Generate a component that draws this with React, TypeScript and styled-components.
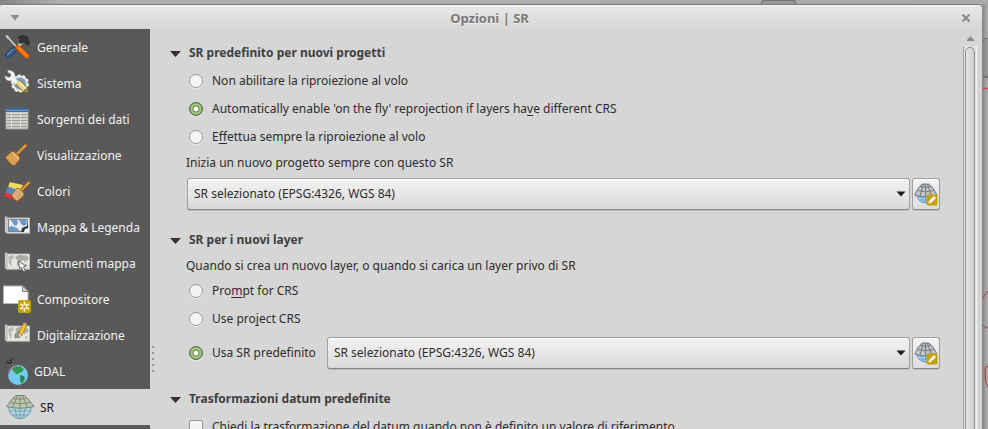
import React, { useState } from "react";
import type { ReactNode } from "react";
import styled, { createGlobalStyle } from "styled-components";

const GlobalStyle = createGlobalStyle`
  * { box-sizing: border-box; }
  body {
    margin: 0;
    overflow: hidden;
    background: #a4a4a4;
    color: #2d2d2d;
    font-family: "Noto Sans", sans-serif;
    font-size: 12px;
    line-height: 16px;
  }
  button, select, input { font: inherit; color: inherit; margin: 0; }
`;

/* ---------- frame ---------- */

const Desktop = styled.div`
  display: grid;
  grid-template-columns: minmax(0, 1fr) 5px;
  grid-template-rows: 4px minmax(0, 1fr);
  height: 100vh;
`;

const TopEdge = styled.div`
  grid-column: 1 / -1;
  display: flex;
  justify-content: flex-end;
  padding-right: 192px;
  background: linear-gradient(90deg, #858585, #adadad 60px, #aaaaaa);
`;

const TopHandle = styled.span`
  width: 35px;
  height: 4px;
  border: 1px solid #707070;
  border-bottom: 0;
  border-radius: 3px 3px 0 0;
  background: #999999;
`;

const SideEdge = styled.div`
  display: grid;
  grid-template-rows: 34px 40px minmax(0, 1fr);
  background: linear-gradient(90deg, #8d8d8d, #b0b0b0);
`;

const EdgeBand = styled.span`
  border-top: 1px solid #777777;
  border-bottom: 2px solid #707070;
  background: linear-gradient(90deg, #838383, #9c9c9c);
`;

const EdgeDrawing = styled.svg`
  display: block;
  width: 5px;
  height: 351px;
`;

const Window = styled.div`
  display: flex;
  flex-direction: column;
  min-height: 0;
  overflow: hidden;
  border-top: 1px solid #777777;
  border-right: 1px solid #858585;
  border-radius: 3px 5px 0 0;
  background: #d6d6d6;
`;

const TitleBar = styled.header`
  display: grid;
  grid-template-columns: 30px minmax(0, 1fr) 33px;
  align-items: center;
  flex: none;
  height: 24px;
  border-top: 1px solid #f7f7f7;
  background: linear-gradient(#e8e8e8, #d6d6d6);
`;

const Title = styled.h1`
  margin: 0;
  text-align: center;
  font-size: 13px;
  line-height: 20px;
  font-weight: 700;
  color: #787878;
  text-shadow: 0 1px 0 #f4f4f4;
`;

const PlainButton = styled.button`
  display: grid;
  place-items: center;
  padding: 0;
  border: 0;
  background: transparent;
`;

const Body = styled.div`
  display: grid;
  grid-template-columns: 150px 6px minmax(0, 1fr) 19px;
  flex: 1;
  min-height: 0;
`;

/* ---------- sidebar ---------- */

const Sidebar = styled.nav`
  overflow: hidden;
  background: #595959;
`;

const NavItem = styled.button<{ $active: boolean }>`
  display: flex;
  align-items: center;
  gap: 3px;
  width: 100%;
  height: 36px;
  padding: 2px 0 0 2px;
  border: 0;
  text-align: left;
  white-space: nowrap;
  background: ${(p) => (p.$active ? "#d6d6d6" : "transparent")};
  color: ${(p) => (p.$active ? "#1a1a1a" : "#f2f2f2")};
`;

const NavIcon = styled.svg`
  flex: none;
  align-self: flex-start;
  height: 32px;
`;

const Splitter = styled.div`
  display: flex;
  flex-direction: column;
  align-items: center;
  gap: 4px;
  padding-top: 317px;
`;

const Dot = styled.span`
  flex: none;
  width: 2px;
  height: 2px;
  background: #969696;
`;

/* ---------- settings ---------- */

const Settings = styled.main`
  display: flex;
  flex-direction: column;
  gap: 16px;
  padding: 10px 23px 0 14px;
  overflow: hidden;
`;

const Section = styled.section`
  flex: none;
`;

const SectionHeader = styled.button`
  display: flex;
  align-items: center;
  gap: 8px;
  height: 28px;
  padding: 0;
  border: 0;
  background: transparent;
  font-weight: 700;
  color: #404040;
`;

const Fields = styled.div`
  padding-left: 16px;
`;

const Caption = styled.p`
  margin: 0;
  line-height: 23px;
`;

const Option = styled.label`
  display: flex;
  align-items: center;
  gap: 9px;
  height: 28px;
  padding-left: 3px;
  white-space: nowrap;
`;

const Radio = styled.input`
  appearance: none;
  flex: none;
  width: 14px;
  height: 14px;
  border: 1px solid #989898;
  border-radius: 50%;
  background: #f4f4f4;
  box-shadow: 0 1px 0 #e6e6e6;

  &:checked {
    border-color: #5b6650;
    background: radial-gradient(circle, #ffffff 0 2px, #64824a 3px, #a0cb78 4px 5px, #7c9f5e 6px);
  }
`;

const Check = styled.input`
  appearance: none;
  flex: none;
  width: 14px;
  height: 14px;
  border: 1px solid #989898;
  border-radius: 2px;
  background: #f4f4f4;
`;

const Mnemonic = styled.span`
  text-decoration: underline;
  text-decoration-skip-ink: none;
  text-underline-offset: 2px;
`;

const PickerRow = styled.div`
  display: flex;
  align-items: center;
  gap: 2px;
  padding-top: 4px;
`;

const OptionCell = styled.div`
  flex: none;
  padding-right: 8px;
`;

const SelectBox = styled.div`
  display: grid;
  grid-template-columns: minmax(0, 1fr) 14px;
  align-items: center;
  flex: 1;
  min-width: 0;
  margin-left: 1px;
`;

const Select = styled.select`
  grid-column: 1 / -1;
  grid-row: 1;
  appearance: none;
  width: 100%;
  height: 32px;
  padding: 0 20px 1px 6px;
  border: 1px solid #a0a0a0;
  border-bottom-color: #858585;
  border-radius: 3px;
  background: linear-gradient(#f3f3f3, #d9d9d9);
  box-shadow: inset 0 1px 0 #ffffff, 0 1px 0 #bdbdbd;
`;

const SelectArrow = styled.svg`
  grid-column: 2;
  grid-row: 1;
  pointer-events: none;
`;

const ToolButton = styled.button`
  display: grid;
  place-items: center;
  flex: none;
  width: 28px;
  height: 32px;
  padding: 0;
  border: 1px solid #a0a0a0;
  border-bottom-color: #858585;
  border-radius: 3px;
  background: linear-gradient(#f3f3f3, #dddddd);
  box-shadow: inset 0 1px 0 #ffffff, 0 1px 0 #bdbdbd;
`;

/* ---------- scroll bar ---------- */

const ScrollBar = styled.div`
  display: flex;
  flex-direction: column;
  min-height: 0;
  padding-right: 5px;
`;

const ScrollUp = styled(PlainButton)`
  flex: none;
  height: 17px;
  padding-top: 2px;
`;

const Track = styled.div`
  flex: 1;
  min-height: 0;
  padding: 1px 1px 0;
  border-left: 1px solid #a6a6a6;
  border-right: 1px solid #f4f4f4;
  background: #e4e4e4;
`;

const Thumb = styled.div`
  height: 100%;
  border: 1px solid #8e8e8e;
  border-bottom: 0;
  border-radius: 5px 5px 0 0;
  background: linear-gradient(90deg, #e6e6e6, #cdcdcd);
`;

/* ---------- drawings ---------- */

const toolsIcon = (
  <>
    <path d="M5 5.5 15.5 17" stroke="#d6d6d6" strokeWidth="1.5" />
    <path d="M3.5 4 6 4.500 7.500 7 5.500 8 4 6Z" fill="#c9c9c9" />
    <path d="M13 17 19 10 21 12 15 19Z" fill="#c7cccb" />
    <path d="M16 6.500C19 3.500 23 3.500 26 7L26.500 9.500 28 11 26 15 23.500 13 22.500 10.500 20.500 11.500 19 13 17 11 18.500 8.500Z" fill="#2e3532" stroke="#252a28" strokeWidth=".6" />
    <path d="M12.500 18 6 24.500" stroke="#1e3960" strokeWidth="5.400" strokeLinecap="round" />
    <path d="M12.500 18 6 24.500" stroke="#3a6299" strokeWidth="3.600" strokeLinecap="round" />
    <path d="M11 18 5 24" stroke="#7c9cc9" strokeWidth="1" />
    <path d="M16 16.500 24.800 25" stroke="#c94900" strokeWidth="5.200" strokeLinecap="round" />
    <path d="M16 16.500 24.800 25" stroke="#ff7508" strokeWidth="3.600" strokeLinecap="round" />
    <path d="M17.500 17 25.500 24.500" stroke="#ffab60" strokeWidth="1" strokeDasharray="2 1" />
  </>
);

const systemIcon = (
  <>
    <circle cx="18" cy="16.500" r="8" fill="#e9ecee" stroke="#f1f1f1" strokeWidth="2" strokeDasharray="3 2" />
    <circle cx="18" cy="16.500" r="6" fill="#709dcb" stroke="#b5c0cb" />
    <path d="M6 3.500C11 3 14 7 12.500 10.500L17 15 14 18 9.500 13.500C6.500 14.500 3 12.500 3 9L6.500 10.500C8 10.500 9.500 9 9 7.500 8.500 6 7 5.500 6 5.500Z" fill="#f3f3f1" stroke="#c7c9c7" strokeWidth=".6" />
    <path d="M15.500 15 23.500 23" stroke="#816a21" strokeWidth="6.200" />
    <path d="M15.500 15 24 23.500" stroke="#e8d27c" strokeWidth="4.800" />
    <path d="M17 14.500 24.500 22" stroke="#fff2b8" strokeWidth="1.200" />
    <path d="M21.500 25 26 20.500" stroke="#806c32" />
    <circle cx="24.500" cy="24" r="1.800" fill="#bba252" stroke="#5b481b" strokeWidth=".8" />
  </>
);

const tableIcon = (
  <>
    <path d="M4 5.500H26V26H4Z" fill="#c9cbc5" stroke="#a3a59f" />
    <path d="M3.500 5H26.500V9H3.500Z" fill="#41699f" />
    <path d="M4 7.500H26" stroke="#6c95c9" />
    <path d="M5 11.500H25M5 14.500H25M5 17.500H25M5 20.500H25M5 23.500H25" stroke="#979993" strokeWidth="1" />
    <path d="M9.500 10V26M18.500 10V26" stroke="#dcddd8" strokeWidth="1" />
    <path d="M4 10.500H26M4 13H26M4 16H26M4 19H26M4 22H26" stroke="#dcddd8" strokeWidth=".8" />
  </>
);

const broomIcon = (
  <>
    <path d="M23.500 6.500 14 16" stroke="#9c6420" strokeWidth="3.400" strokeLinecap="round" />
    <path d="M23.500 6.500 14 16" stroke="#dd9c40" strokeWidth="2" strokeLinecap="round" />
    <path d="M9 13 12 12.500 17.500 18 17.500 21 12 26.800 9 25 6 22 3.500 18.500Z" fill="#dfa656" stroke="#9d6524" strokeWidth=".9" />
    <path d="M6 16 13.500 24M8 14 16 22M5 19 10 25" stroke="#bc8238" strokeWidth=".6" />
    <path d="M10 13.500 17 20" stroke="#efc17b" strokeWidth="1.200" />
  </>
);

const colorsIcon = (
  <>
    <path d="M8 7 21 10 18 16 6 12Z" fill="#efdb55" />
    <path d="M6 11.500 16 15 12 21 3.500 18Z" fill="#5f86b8" />
    <path d="M3.500 17.500 12 20.500 14 25 1.500 21.500Z" fill="#dc3230" />
    <path d="M27 7.500 19 15.500" stroke="#986123" strokeWidth="3.200" strokeLinecap="round" />
    <path d="M27 7.500 19 15.500" stroke="#dd9c40" strokeWidth="1.800" strokeLinecap="round" />
    <path d="M14.500 13.500 17 13.500 22 18.500 21.500 21 15.500 26 12.500 24.500 9.500 20Z" fill="#ddb07a" stroke="#9b642b" strokeWidth=".9" />
    <path d="M12 17.500 18 23.500M14 15.500 20 21.500" stroke="#b87f48" strokeWidth=".6" />
  </>
);

const mapSheet = (
  <>
    <path d="M4.500 7H27.500V22H4.500Z" fill="#e6e6e2" stroke="#c1c1bc" strokeWidth=".8" />
    <path d="M3 5.500H5V21.500H3Z" fill="#d8d8d3" stroke="#949490" strokeWidth=".6" />
    <path d="M4 22.500H28" stroke="#a8a8a4" strokeWidth=".8" />
  </>
);

const legendIcon = (
  <>
    {mapSheet}
    <path d="M6.500 8.500H25.500V20.500H6.500Z" fill="#eceeed" stroke="#53585c" strokeWidth=".7" />
    <path d="M9 9H15L16 12 14 15 12 14 10 11ZM17 9H24L25 13 22 15 19 13 18 11ZM7 16 10 15 15 17 18 20H7Z" fill="#6b98cd" />
    <path d="M19 21 20 17 25 15 26 13V18L22 21Z" fill="#30363a" />
    <path d="M22 21 23 18 27 17V21Z" fill="#f6f6f6" />
  </>
);

const continents = (
  <>
    <path d="M6 10 9 8 12 9 11 12 9 13 10 16 9 20 7 16Z" fill="#b9bbb2" />
    <path d="M13 10 17 8 25 8.500 27 12 23 15 21 13 18 15 15 13ZM15 14 18 16 17 20 15 18ZM23 17 26 18 24 20Z" fill="#a9aca3" />
  </>
);

const mapToolsIcon = (
  <>
    {mapSheet}
    {continents}
    <path d="M16.500 14 17.500 22 19.500 20.500 21.500 25 23.500 24 21.500 19.800 24 19Z" fill="#f5f5f5" stroke="#555753" strokeWidth=".9" />
  </>
);

const composerIcon = (
  <>
    <path d="M1.500 3H21L26 8V20.500H1.500Z" fill="#ffffff" stroke="#b7b7b7" />
    <path d="M20.500 3V8.500H26Z" fill="#d4d4d4" stroke="#777777" strokeWidth=".9" />
    <rect x="16" y="17" width="13" height="13" rx="2" fill="#c4a000" />
    <path d="M22.500 18.500V28.500M18.200 21 26.800 26M26.800 21 18.200 26" stroke="#fffbe5" strokeWidth="1.700" />
    <circle cx="22.500" cy="23.500" r="1.500" fill="#c4a000" />
  </>
);

const digitizeIcon = (
  <>
    {mapSheet}
    {continents}
    <path d="M13 15 17 12 20 15 17 18 13 19Z" fill="#92988b" stroke="#656c60" strokeWidth=".6" />
    <path d="M23 5.500 18.500 15" stroke="#ac7d00" strokeWidth="4.200" />
    <path d="M23 5.500 18.500 15" stroke="#f5cb28" strokeWidth="2.800" />
    <path d="M21.500 4 25 5.500" stroke="#e8ac9a" strokeWidth="1.200" />
    <path d="M16.500 14.500 20.500 16 16.500 19Z" fill="#ecd2a3" stroke="#8b7451" strokeWidth=".5" />
  </>
);

const gdalIcon = (
  <>
    <circle cx="16" cy="20" r="10" fill="#73cbf4" />
    <path d="M12 12 18 11 22 14 20 17 17 18 16 20 13 18 10 14.500Z" fill="#2e9a50" />
    <path d="M18 20 22 21 23 24 20 29 18 26Z" fill="#278c48" />
    <path d="M6 20C8 15 10 13 15 11" fill="none" stroke="#b4586a" strokeWidth="1" />
    <path d="M9 8 14 12M8 9 9 14" stroke="#a44558" strokeWidth=".7" strokeDasharray="2 1" />
    <path d="M2.500 8 5 7 6.500 8.500 4 9.500ZM8.500 4 12 2.500 12.500 4 9.500 5.500Z" fill="#454545" />
    <path d="M5 6 8 4.500 10 7 7 9Z" fill="#111111" />
    <path d="M6.500 6 8 7" stroke="#eeeeee" />
  </>
);

const projectionIcon = (
  <>
    <circle cx="18" cy="16.500" r="11.200" fill="#b1d5df" stroke="#6c9dac" />
    <path d="M7.500 20H28.500M10 24H26M18 15V28M13 15Q13 23 16 27M23 15Q23 23 20 27" fill="none" stroke="#6599a8" strokeWidth=".8" />
    <path d="M13.500 4.500H22.500L27 9 32 15.500Q18 19 4.500 15.500L9.500 9Z" fill="#bbc5ad" stroke="#747d6a" strokeWidth=".9" />
    <path d="M11.500 7.500Q18 9 24.500 7.500M8.500 11.500Q18 14 28 11.500M18 4.500V17M15.500 4.500 10.500 16.500M20.500 4.500 25.500 16.500" fill="none" stroke="#747d6a" strokeWidth=".8" />
  </>
);

function CrsGlyph() {
  return (
    <svg width="24" height="24" viewBox="0 0 24 24" aria-hidden="true">
      <circle cx="11.500" cy="12" r="9" fill="#b9dcf8" stroke="#719cc2" />
      <path d="M3 15H20M5 18H18M11.500 12V21M7.500 13Q7.500 18 10 21M15.500 13Q15.500 18 13 21" fill="none" stroke="#4f91c7" strokeWidth=".8" />
      <path d="M8 2H15L19 6 23 13Q11.500 17 .5 13L4.500 6Z" fill="#c1c3c5" stroke="#6f7479" strokeWidth=".9" />
      <path d="M6 4.500Q11.500 6 17 4.500M3.500 8.500Q11.500 11 20 8.500M11.500 2V14.500M9.500 2 6 14M13.500 2 17.500 14" fill="none" stroke="#70757a" strokeWidth=".9" />
      <rect x="12.500" y="12.500" width="11" height="11" rx="1.500" fill="#c4a000" />
      <path d="M14.500 21.500 15 19 20 14 22 16 17 21Z" fill="#ffffff" />
      <path d="M15.500 18.500 17.500 20.500" stroke="#c4a000" strokeWidth=".7" />
    </svg>
  );
}

function CrsSelect({ label }: { label: string }) {
  return (
    <>
      <SelectBox>
        <Select aria-label={label}>
          <option>SR selezionato (EPSG:4326, WGS 84)</option>
        </Select>
        <SelectArrow width="10" height="6" viewBox="0 0 10 6" aria-hidden="true">
          <path d="M.5.5H9.500L5 5.500Z" fill="#1f1f1f" />
        </SelectArrow>
      </SelectBox>
      <ToolButton type="button" aria-label="Seleziona SR">
        <CrsGlyph />
      </ToolButton>
    </>
  );
}

function Group({ title, children }: { title: string; children: ReactNode }) {
  const [open, setOpen] = useState(true);
  return (
    <Section>
      <SectionHeader type="button" aria-expanded={open} onClick={() => setOpen(!open)}>
        <svg width="11" height="8" viewBox="0 0 11 8" aria-hidden="true">
          <path d="M0 2H11L5.500 8Z" fill="#333333" />
        </svg>
        {title}
      </SectionHeader>
      {open && <Fields>{children}</Fields>}
    </Section>
  );
}

const pages: { name: string; icon: ReactNode; iconWidth: number }[] = [
  { name: "Generale", icon: toolsIcon, iconWidth: 32 },
  { name: "Sistema", icon: systemIcon, iconWidth: 32 },
  { name: "Sorgenti dei dati", icon: tableIcon, iconWidth: 32 },
  { name: "Visualizzazione", icon: broomIcon, iconWidth: 32 },
  { name: "Colori", icon: colorsIcon, iconWidth: 32 },
  { name: "Mappa & Legenda", icon: legendIcon, iconWidth: 32 },
  { name: "Strumenti mappa", icon: mapToolsIcon, iconWidth: 32 },
  { name: "Compositore", icon: composerIcon, iconWidth: 32 },
  { name: "Digitalizzazione", icon: digitizeIcon, iconWidth: 32 },
  { name: "GDAL", icon: gdalIcon, iconWidth: 29 },
  { name: "SR", icon: projectionIcon, iconWidth: 35 },
];

export default function App() {
  const [page, setPage] = useState("SR");
  return (
    <>
      <GlobalStyle />
      <Desktop>
        <TopEdge>
          <TopHandle />
        </TopEdge>
        <Window>
          <TitleBar>
            <PlainButton type="button" aria-label="Menu finestra">
              <svg width="10" height="6" viewBox="0 0 10 6" aria-hidden="true">
                <path d="M.5 0H9.500L5 5.500Z" fill="#8c8c8c" />
              </svg>
            </PlainButton>
            <Title>Opzioni | SR</Title>
            <PlainButton type="button" aria-label="Chiudi">
              <svg width="10" height="10" viewBox="0 0 10 10" aria-hidden="true">
                <path d="M1.500 1.500 8.500 8.500M8.500 1.500 1.500 8.500" stroke="#8c8c8c" strokeWidth="2.200" />
              </svg>
            </PlainButton>
          </TitleBar>
          <Body>
            <Sidebar aria-label="Opzioni">
              {pages.map((item) => (
                <NavItem
                  key={item.name}
                  type="button"
                  $active={page === item.name}
                  onClick={() => setPage(item.name)}
                >
                  <NavIcon
                    width={item.iconWidth}
                    viewBox={`0 0 ${item.iconWidth} 32`}
                    fill="none"
                    aria-hidden="true"
                  >
                    {item.icon}
                  </NavIcon>
                  {item.name}
                </NavItem>
              ))}
            </Sidebar>
            <Splitter>
              <Dot />
              <Dot />
              <Dot />
              <Dot />
              <Dot />
            </Splitter>
            <Settings>
              <Group title="SR predefinito per nuovi progetti">
                <Option>
                  <Radio type="radio" name="otf" />
                  <span>Non abilitare la riproiezione al volo</span>
                </Option>
                <Option>
                  <Radio type="radio" name="otf" defaultChecked />
                  <span>
                    Automatically enable 'on the fly' reprojection if layers ha<Mnemonic>v</Mnemonic>e different CRS
                  </span>
                </Option>
                <Option>
                  <Radio type="radio" name="otf" />
                  <span>
                    E<Mnemonic>f</Mnemonic>fettua sempre la riproiezione al volo
                  </span>
                </Option>
                <Caption>Inizia un nuovo progetto sempre con questo SR</Caption>
                <PickerRow>
                  <CrsSelect label="Inizia un nuovo progetto sempre con questo SR" />
                </PickerRow>
              </Group>
              <Group title="SR per i nuovi layer">
                <Caption>Quando si crea un nuovo layer, o quando si carica un layer privo di SR</Caption>
                <Option>
                  <Radio type="radio" name="layer" />
                  <span>
                    Pro<Mnemonic>m</Mnemonic>pt for CRS
                  </span>
                </Option>
                <Option>
                  <Radio type="radio" name="layer" />
                  <span>
                    Use pro<Mnemonic>j</Mnemonic>ect CRS
                  </span>
                </Option>
                <PickerRow>
                  <OptionCell>
                    <Option>
                      <Radio type="radio" name="layer" defaultChecked />
                      <span>Usa SR predefinito</span>
                    </Option>
                  </OptionCell>
                  <CrsSelect label="SR predefinito per i nuovi layer" />
                </PickerRow>
              </Group>
              <Group title="Trasformazioni datum predefinite">
                <Option>
                  <Check type="checkbox" />
                  <span>Chiedi la trasformazione del datum quando non è definito un valore di riferimento</span>
                </Option>
              </Group>
            </Settings>
            <ScrollBar>
              <ScrollUp type="button" aria-label="Scorri in alto">
                <svg width="7" height="5" viewBox="0 0 7 5" aria-hidden="true">
                  <path d="M3.500 0 7 4V5H0V4Z" fill="#8c8c8c" />
                </svg>
              </ScrollUp>
              <Track>
                <Thumb />
              </Track>
            </ScrollBar>
          </Body>
        </Window>
        <SideEdge>
          <span />
          <EdgeBand />
          <EdgeDrawing viewBox="0 0 5 351" fill="none" aria-hidden="true">
            <path d="M0 10.500H5" stroke="#d04747" strokeWidth="1.500" />
            <path d="M0 220 5 213M0 247Q2 250 5 250" stroke="#b82e33" />
            <path d="M5 288 2 290 2.500 303 5 309" stroke="#b82e33" />
          </EdgeDrawing>
        </SideEdge>
      </Desktop>
    </>
  );
}
